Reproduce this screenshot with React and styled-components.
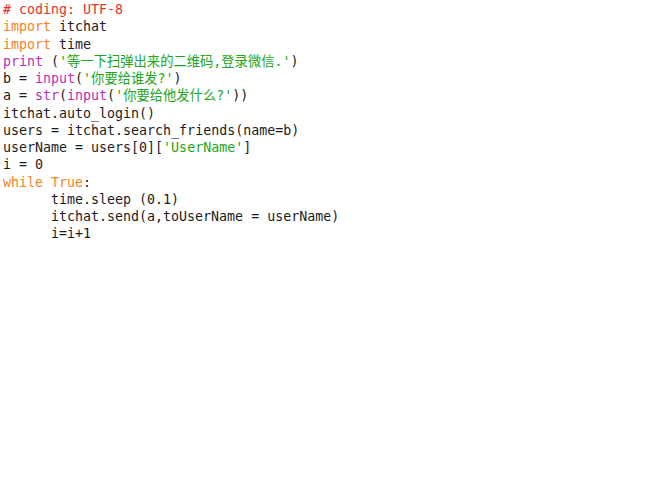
import React from 'react';
import styled, { createGlobalStyle } from 'styled-components';

const GlobalStyle = createGlobalStyle`
  html, body {
    margin: 0;
    padding: 0;
    background: #ffffff;
  }
`;

const Editor = styled.pre`
  margin: 0;
  padding: 1px 3px;
  font-family: "DejaVu Sans Mono", "Liberation Mono", "Noto Sans CJK SC", monospace;
  font-size: 13.3px;
  line-height: 17.25px;
  color: #1c1c1c;
  white-space: pre;
`;

const Line = styled.div`
  padding-left: ${(p) => (p.indent ? p.indent * 8 : 0)}px;
`;

const Comment = styled.span`
  color: #e5322b;
`;

const Keyword = styled.span`
  color: #f5841f;
`;

const Builtin = styled.span`
  color: #b232b5;
`;

const Str = styled.span`
  color: #21a621;
`;

const App = () => (
  <>
    <GlobalStyle />
    <Editor>
      <Line><Comment># coding: UTF-8</Comment></Line>
      <Line><Keyword>import</Keyword> itchat</Line>
      <Line><Keyword>import</Keyword> time</Line>
      <Line><Builtin>print</Builtin> (<Str>'等一下扫弹出来的二维码,登录微信.'</Str>)</Line>
      <Line>b = <Builtin>input</Builtin>(<Str>'你要给谁发?'</Str>)</Line>
      <Line>a = <Builtin>str</Builtin>(<Builtin>input</Builtin>(<Str>'你要给他发什么?'</Str>))</Line>
      <Line>itchat.auto_login()</Line>
      <Line>users = itchat.search_friends(name=b)</Line>
      <Line>userName = users[0][<Str>'UserName'</Str>]</Line>
      <Line>i = 0</Line>
      <Line><Keyword>while</Keyword> <Keyword>True</Keyword>:</Line>
      <Line indent={6}>time.sleep (0.1)</Line>
      <Line indent={6}>itchat.send(a,toUserName = userName)</Line>
      <Line indent={6}>i=i+1</Line>
    </Editor>
  </>
);

export default App;
